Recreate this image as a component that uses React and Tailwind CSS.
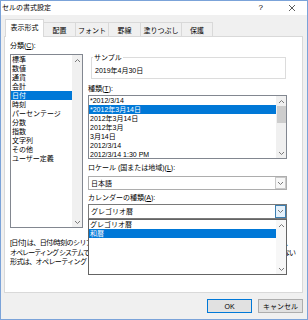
import React from "react";

const categories = ["標準", "数値", "通貨", "会計", "日付", "時刻", "パーセンテージ", "分数", "指数", "文字列", "その他", "ユーザー定義"];
const types = ["*2012/3/14", "*2012年3月14日", "2012年3月14日", "2012年3月", "3月14日", "2012/3/14", "2012/3/14 1:30 PM"];

const tabs = [
    { label: "表示形式", w: "w-[39px]" },
    { label: "配置", w: "w-[32px]" },
    { label: "フォント", w: "w-[33px]" },
    { label: "罫線", w: "w-[32px]" },
    { label: "塗りつぶし", w: "w-[41px]" },
    { label: "保護", w: "w-[31px]" },
];

function Chevron({ up }) {
    return (
        <svg width="7" height="5" viewBox="0 0 7 5">
            <path d={up ? "M1 4L3.5 1.5L6 4" : "M1 1L3.5 3.5L6 1"} fill="none" stroke="#7a7a7a" strokeWidth="1" />
        </svg>
    );
}

function ScrollBar({ thumb }) {
    return (
        <div className="w-[10px] h-full bg-[#f0f0f0] flex flex-col items-center">
            <div className="h-[10px] flex items-center justify-center"><Chevron up /></div>
            {thumb && <div className="w-[9px] h-[17px] bg-[#cdcdcd]"></div>}
            <div className="flex-1"></div>
            <div className="h-[10px] flex items-center justify-center"><Chevron /></div>
        </div>
    );
}

function App() {
    return (
        <div className="w-[308px] h-[320px] border border-[#7ba3d9] bg-[#f0f0f0] flex flex-col text-[7px] text-black font-['Liberation_Sans','Noto_Sans_CJK_JP',sans-serif] overflow-hidden">

            {/* title bar */}
            <div className="h-[14px] bg-white flex items-center pl-[1px]">
                <span className="leading-[10px]">セルの書式設定</span>
                <span className="ml-auto mr-[25px] text-[8px] leading-[10px]">?</span>
                <svg width="8" height="8" viewBox="0 0 8 8" className="mr-[11px]">
                    <path d="M1 1L7 7M7 1L1 7" stroke="#333" strokeWidth="0.8" />
                </svg>
            </div>

            {/* tabs */}
            <div className="h-[21px] flex items-end pl-[4px]">
                {tabs.map((t, i) =>
                    i === 0 ? (
                        <div key={t.label} className={`${t.w} h-[18px] bg-white border border-b-0 border-[#d9d9d9] flex items-center justify-center leading-[9px] relative z-10 -mb-[1px] pb-[2px]`}>
                            {t.label}
                        </div>
                    ) : (
                        <div key={t.label} className={`${t.w} h-[14px] border border-b-0 border-l-0 border-[#d9d9d9] flex items-center justify-center leading-[9px] pt-[1px]`}>
                            {t.label}
                        </div>
                    )
                )}
            </div>

            {/* panel */}
            <div className="w-[299px] h-[257px] ml-[3px] bg-white border border-[#d9d9d9] pt-[4px] pl-[5px] flex flex-col">
                <div className="flex gap-[5px]">

                    {/* category */}
                    <div className="w-[73px] flex flex-col">
                        <div className="h-[13px] leading-[10px]">分類(<span className="underline">C</span>):</div>
                        <div className="h-[174px] border border-[#828790] flex">
                            <div className="flex-1 flex flex-col">
                                {categories.map((c) => (
                                    <div key={c} className={`h-[9px] leading-[9px] pl-[1px] whitespace-nowrap ${c === "日付" ? "bg-[#0078d7] text-white" : ""}`}>{c}</div>
                                ))}
                            </div>
                            <ScrollBar />
                        </div>
                    </div>

                    {/* right side */}
                    <div className="w-[199px] mt-[11px] flex flex-col">
                        <div className="pt-[5px] pl-[3px] pr-[1px]">
                            <div className="relative h-[22px] border border-[#dcdcdc] pl-[3px] pt-[8px] leading-[9px]">
                                <span className="absolute -top-[5px] left-[1px] px-[1px] bg-white leading-[9px]">サンプル</span>
                                2019年4月30日
                            </div>
                        </div>

                        <div className="mt-[5px] leading-[10px]">種類(<span className="underline">T</span>):</div>
                        <div className="mt-[1px] h-[64px] border border-[#828790] flex">
                            <div className="flex-1 flex flex-col overflow-hidden">
                                {types.map((t, i) => (
                                    <div key={t} className={`h-[9px] leading-[9px] pl-[1px] whitespace-nowrap ${i === 1 ? "bg-[#0078d7] text-white" : ""}`}>{t}</div>
                                ))}
                            </div>
                            <ScrollBar thumb />
                        </div>

                        <div className="mt-[4px] leading-[10px]">ロケール (国または地域)(<span className="underline">L</span>):</div>
                        <div className="mt-[3px] h-[14px] border border-[#adadad] flex items-center pl-[2px]">
                            <span className="flex-1 leading-[9px]">日本語</span>
                            <div className="w-[11px] h-[12px] border border-[#c9c9c9] bg-[#f7f7f7] flex items-center justify-center">
                                <Chevron />
                            </div>
                        </div>

                        <div className="mt-[3px] leading-[10px]">カレンダーの種類(<span className="underline">A</span>):</div>
                        <div className="relative mt-[1px]">
                            <div className="h-[15px] border border-[#7a7a7a] flex items-center pl-[2px]">
                                <span className="flex-1 leading-[9px]">グレゴリオ暦</span>
                                <div className="w-[11px] h-[13px] border border-[#3c7fb1] bg-[#e5f1fb] flex items-center justify-center">
                                    <Chevron />
                                </div>
                            </div>
                            <div className="absolute top-full left-0 w-[199px] h-[56px] bg-white border border-[#646464] flex z-10">
                                <div className="flex-1 flex flex-col">
                                    <div className="h-[9px] leading-[9px] pl-[1px]">グレゴリオ暦</div>
                                    <div className="h-[9px] leading-[9px] pl-[1px] bg-[#0078d7] text-white">和暦</div>
                                </div>
                                <div className="w-[10px] h-full bg-[#f7f7f7] flex flex-col items-center">
                                    <div className="h-[10px] flex items-center justify-center"><Chevron up /></div>
                                    <div className="flex-1"></div>
                                    <div className="h-[10px] flex items-center justify-center"><Chevron /></div>
                                </div>
                            </div>
                        </div>
                    </div>
                </div>

                {/* description */}
                <div className="mt-[10px] flex flex-col leading-[9.5px] whitespace-nowrap">
                    <div className="tracking-[-0.6px]">[日付] は、日付/時刻のシリアル値を日付形式で表示します。アスタリスク (*) で始まる日付形式は、</div>
                    <div className="tracking-[-0.95px]">オペレーティング システムで指定された地域の日付/時刻の設定の変更に対応します。アスタリスクのない</div>
                    <div className="tracking-[-0.6px]">形式は、オペレーティング システムの設定の影響を受けません。</div>
                </div>
            </div>

            {/* buttons */}
            <div className="mt-[6px] flex justify-end gap-[6px] pr-[4px]">
                <button className="w-[45px] h-[14px] bg-[#e1e1e1] border border-[#0078d7] leading-[9px]">OK</button>
                <button className="w-[45px] h-[14px] bg-[#e1e1e1] border border-[#adadad] leading-[9px]">キャンセル</button>
            </div>
        </div>
    );
}

export default App;
